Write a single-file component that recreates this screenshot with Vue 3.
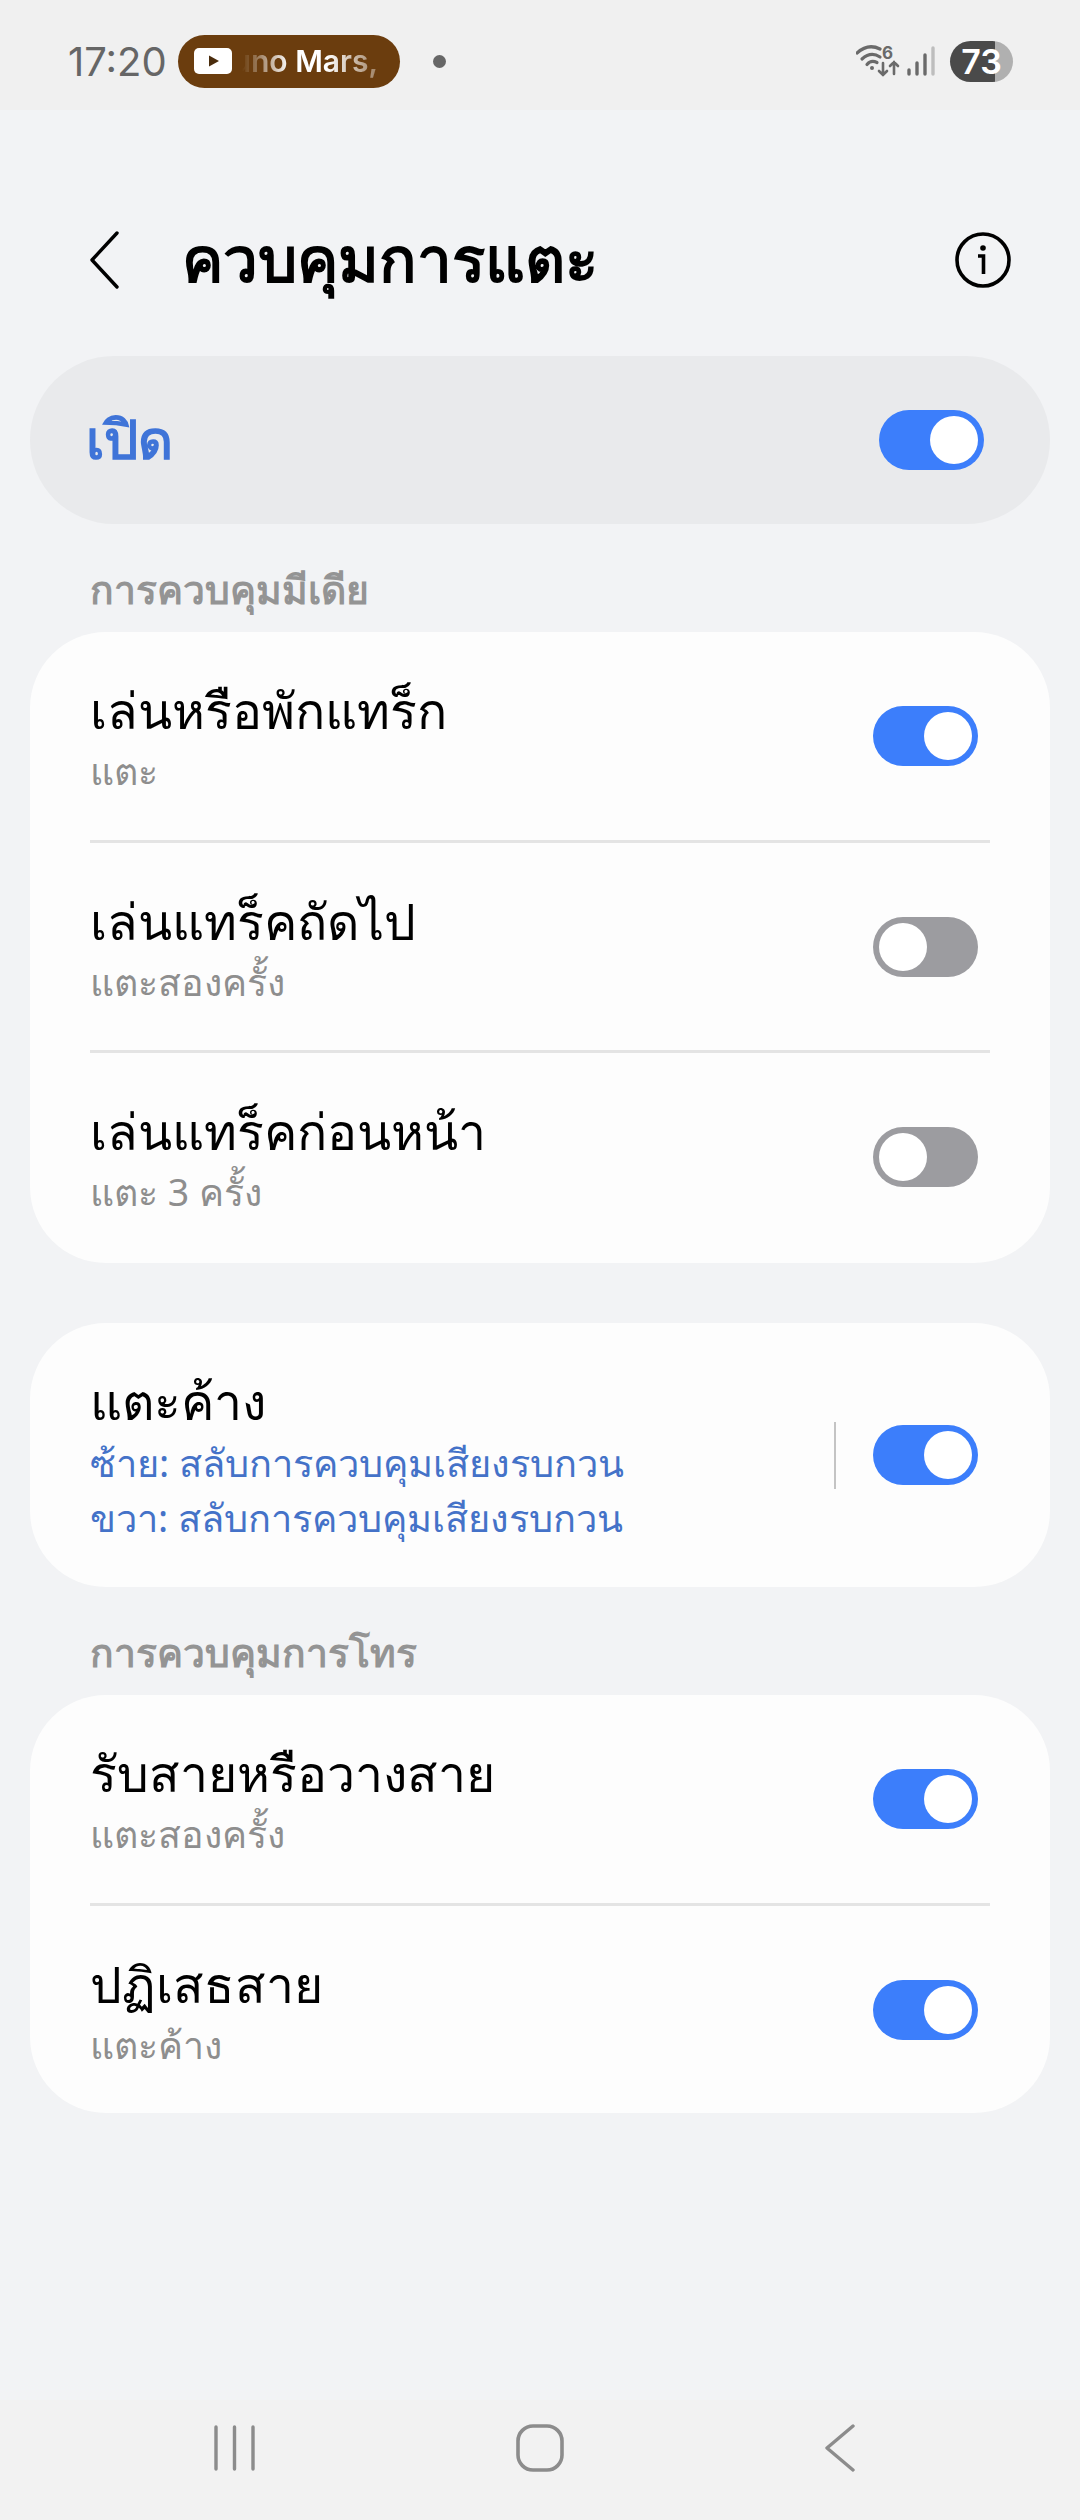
<template>
  <div class="page">
    <div class="status-bar">
      <span class="clock">17:20</span>
      <div class="media-pill">
        <svg class="yt" width="38" height="26" viewBox="0 0 38 26">
          <rect width="38" height="26" rx="5" fill="#fff" />
          <path d="M15 7.5 L25 13 L15 18.5 Z" fill="#4a2c0c" />
        </svg>
        <div class="marquee"><span>uno Mars,</span></div>
      </div>
      <span class="dot"></span>
      <div class="status-icons">
        <svg width="44" height="34" viewBox="0 0 44 34" fill="none" stroke="#6a6a6a" stroke-linecap="round">
          <path d="M1 9 Q12 -1 24 5" stroke-width="3.2" />
          <path d="M6 15 Q15 7 24 13" stroke-width="3.2" />
          <path d="M11 20.5 Q15 15.5 21 18.5" stroke-width="3.2" />
          <circle cx="16" cy="24" r="2" fill="#6a6a6a" stroke="none" />
          <path d="M27 19 V31 M23 27 L27 31 L31 27" stroke-width="2.6" />
          <path d="M38 30 V18 M34 22 L38 18 L42 22" stroke-width="2.6" />
          <text x="26" y="15" class="six" fill="#6a6a6a" stroke="none">6</text>
        </svg>
        <svg class="signal" width="28" height="30" viewBox="0 0 28 30" stroke-linecap="round" stroke-width="3.4" fill="none">
          <path d="M2 28 V24" stroke="#6a6a6a" />
          <path d="M10 28 V17" stroke="#6a6a6a" />
          <path d="M18 28 V9" stroke="#6a6a6a" />
          <path d="M26 28 V2" stroke="#bdbdbd" />
        </svg>
        <div class="battery"><span>73</span></div>
      </div>
    </div>

    <header class="title-bar">
      <svg class="back" width="34" height="58" viewBox="0 0 34 58" fill="none" stroke="#000" stroke-width="3.4" stroke-linecap="round" stroke-linejoin="round">
        <path d="M29 2 L4 29 L29 56" />
      </svg>
      <h1>ควบคุมการแตะ</h1>
      <svg class="info" width="58" height="58" viewBox="0 0 58 58" fill="none" stroke="#000">
        <circle cx="29" cy="29" r="26" stroke-width="3.6" />
        <circle cx="29" cy="17" r="2.8" fill="#000" stroke="none" />
        <path d="M24 25 H29.5 V43" stroke-width="3.6" />
      </svg>
    </header>

    <div class="master">
      <span>เปิด</span>
      <div class="toggle on"></div>
    </div>

    <div class="section-head">การควบคุมมีเดีย</div>
    <section class="card media">
      <div v-for="row in mediaRows" :key="row.title" class="row">
        <div class="row-text">
          <div class="row-title">{{ row.title }}</div>
          <div class="row-sub">{{ row.sub }}</div>
        </div>
        <div class="toggle" :class="{ on: row.on }"></div>
      </div>
    </section>

    <section class="card hold">
      <div class="row hold-row">
        <div class="row-text">
          <div class="row-title">แตะค้าง</div>
          <div class="row-link">ซ้าย: สลับการควบคุมเสียงรบกวน</div>
          <div class="row-link">ขวา: สลับการควบคุมเสียงรบกวน</div>
        </div>
        <div class="vline"></div>
        <div class="toggle on"></div>
      </div>
    </section>

    <div class="section-head">การควบคุมการโทร</div>
    <section class="card">
      <div v-for="row in callRows" :key="row.title" class="row">
        <div class="row-text">
          <div class="row-title">{{ row.title }}</div>
          <div class="row-sub">{{ row.sub }}</div>
        </div>
        <div class="toggle" :class="{ on: row.on }"></div>
      </div>
    </section>

    <nav class="nav-bar">
      <svg width="41" height="48" viewBox="0 0 41 48" fill="none" stroke="#8c8c8c" stroke-width="3.4" stroke-linecap="round">
        <path d="M2 3 V45 M20.5 3 V45 M39 3 V45" />
      </svg>
      <svg width="48" height="48" viewBox="0 0 48 48" fill="none" stroke="#8c8c8c" stroke-width="3.6">
        <rect x="2" y="2" width="44" height="44" rx="15" />
      </svg>
      <svg width="30" height="50" viewBox="0 0 30 50" fill="none" stroke="#8c8c8c" stroke-width="3.4" stroke-linecap="round" stroke-linejoin="round">
        <path d="M28 3 L2 25 L28 47" />
      </svg>
    </nav>
  </div>
</template>

<script setup>
const mediaRows = [
  { title: 'เล่นหรือพักแทร็ก', sub: 'แตะ', on: true },
  { title: 'เล่นแทร็คถัดไป', sub: 'แตะสองครั้ง', on: false },
  { title: 'เล่นแทร็คก่อนหน้า', sub: 'แตะ 3 ครั้ง', on: false },
]

const callRows = [
  { title: 'รับสายหรือวางสาย', sub: 'แตะสองครั้ง', on: true },
  { title: 'ปฏิเสธสาย', sub: 'แตะค้าง', on: true },
]
</script>

<style>
body {
  background: #f2f3f5;
}
</style>

<style scoped>
.page {
  width: 1080px;
  height: 2520px;
  display: flex;
  flex-direction: column;
  background: #f2f3f5;
  font-family: "Noto Sans", "DejaVu Sans", sans-serif;
  overflow: hidden;
}

.status-bar {
  height: 110px;
  padding: 12px 67px 0 68px;
  box-sizing: border-box;
  display: flex;
  align-items: center;
  background: #f0f0f0;
}

.clock {
  font-family: Inter, sans-serif;
  font-size: 40px;
  color: #666;
  width: 110px;
}

.media-pill {
  width: 222px;
  height: 53px;
  border-radius: 27px;
  background: #6b3d0e;
  display: flex;
  align-items: center;
  padding-left: 16px;
  box-sizing: border-box;
}

.marquee {
  width: 136px;
  margin-left: 10px;
  overflow: hidden;
  display: flex;
  justify-content: flex-end;
  font-family: Inter, sans-serif;
  font-size: 30px;
  font-weight: 600;
  color: #fff;
  white-space: nowrap;
  -webkit-mask-image: linear-gradient(90deg, transparent 0, #fff 35%, #fff 62%, rgba(255, 255, 255, 0.35) 100%);
  mask-image: linear-gradient(90deg, transparent 0, #fff 35%, #fff 62%, rgba(255, 255, 255, 0.35) 100%);
}

.dot {
  width: 13px;
  height: 13px;
  border-radius: 50%;
  background: #666;
  margin-left: 33px;
}

.status-icons {
  margin-left: auto;
  display: flex;
  align-items: center;
}

.six {
  font-family: Inter, sans-serif;
  font-size: 17px;
  font-weight: 700;
}

.signal {
  margin-left: 7px;
}

.battery {
  width: 63px;
  height: 41px;
  margin-left: 15px;
  border-radius: 21px;
  background: linear-gradient(90deg, #4a4a4a 0 71%, #b0b0b0 71%);
  display: flex;
  align-items: center;
  justify-content: center;
  color: #fff;
  font-family: Inter, sans-serif;
  font-size: 34px;
  font-weight: 600;
}

.title-bar {
  height: 246px;
  box-sizing: border-box;
  padding: 54px 68px 0 88px;
  display: flex;
  align-items: center;
}

.title-bar h1 {
  margin: 0 0 0 60px;
  font-size: 62px;
  font-weight: 700;
  color: #000;
  flex: 1;
}

.master {
  height: 168px;
  margin: 0 30px;
  padding: 0 66px 0 56px;
  box-sizing: border-box;
  border-radius: 84px;
  background: #e9eaec;
  display: flex;
  align-items: center;
  justify-content: space-between;
  font-size: 54px;
  font-weight: 700;
  color: #3f74d8;
}

.section-head {
  height: 108px;
  box-sizing: border-box;
  padding: 41px 0 0 90px;
  font-size: 39px;
  line-height: 48px;
  font-weight: 700;
  color: #949494;
}

.card {
  margin: 0 30px;
  background: #fdfdfd;
  border-radius: 76px;
}

.card.media {
  padding-bottom: 3px;
}

.card.hold {
  margin-top: 60px;
}

.row {
  height: 210px;
  margin: 0 60px;
  box-sizing: border-box;
  display: flex;
  align-items: center;
  justify-content: space-between;
  border-top: 3px solid #e4e4e4;
  padding-right: 12px;
}

.row:first-child {
  height: 208px;
  border-top: 0;
}

.row.hold-row {
  height: 264px;
}

.row-text {
  flex: 1;
  padding-top: 3px;
}

.hold-row .row-text {
  padding-top: 5px;
}

.row-title {
  font-size: 50px;
  line-height: 62px;
  color: #000;
}

.row-sub {
  margin-top: 5px;
  font-size: 37.5px;
  line-height: 50px;
  color: #8e8e8e;
}

.row-link {
  font-size: 38px;
  line-height: 55px;
  color: #4472c8;
}

.row-title + .row-link {
  margin-top: 3px;
}

.vline {
  width: 2px;
  height: 67px;
  background: #c4c4c4;
  margin-right: 37px;
}

.toggle {
  position: relative;
  width: 105px;
  height: 60px;
  border-radius: 30px;
  background: #9c9ca0;
  flex: none;
}

.toggle::after {
  content: "";
  position: absolute;
  top: 6px;
  left: 6px;
  width: 48px;
  height: 48px;
  border-radius: 50%;
  background: #fff;
}

.toggle.on {
  background: #3c7efb;
}

.toggle.on::after {
  left: 51px;
}

.nav-bar {
  margin-top: auto;
  height: 120px;
  box-sizing: border-box;
  display: flex;
  align-items: center;
  justify-content: space-between;
  padding: 0 225px 24px 214px;
  background: #f2f2f2;
}
</style>
